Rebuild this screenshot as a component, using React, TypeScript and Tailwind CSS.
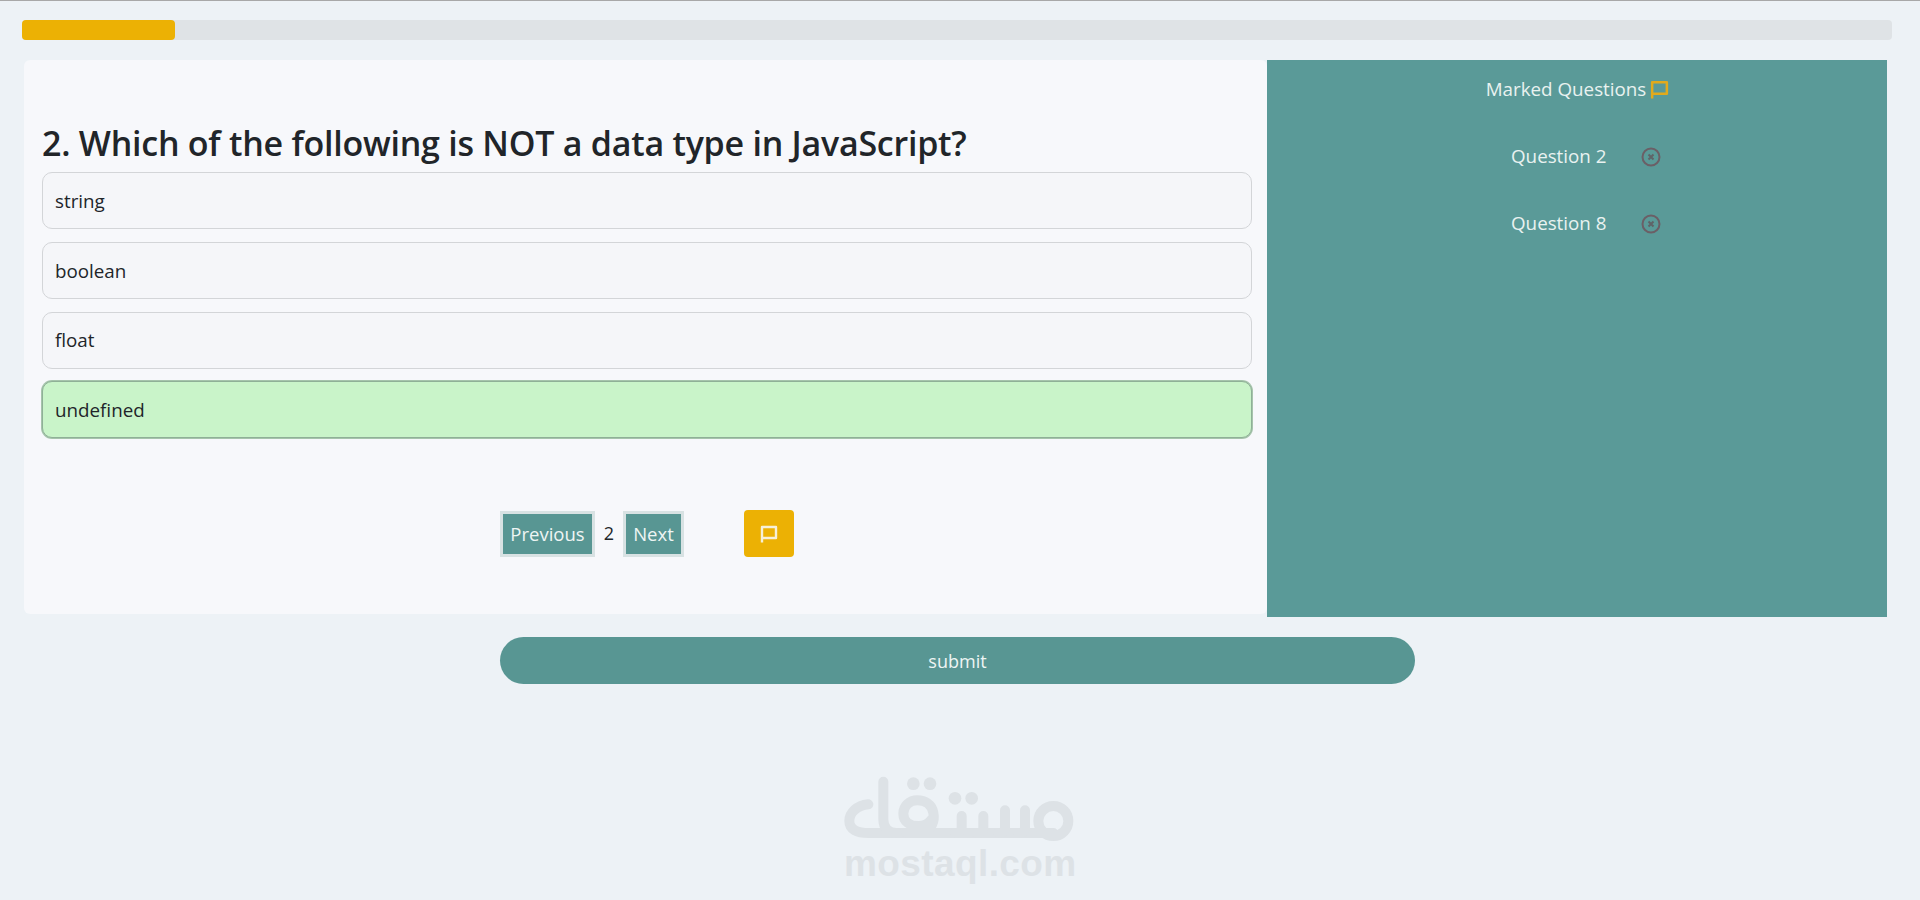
import React from "react";

const font = { fontFamily: '"Open Sans", "Noto Sans", sans-serif' };

function Flag({ className }: { className: string }) {
  return (
    <svg viewBox="0 0 20 20" fill="none" stroke="currentColor" strokeWidth="2.4" strokeLinejoin="round" className={className}>
      <path d="M3 18.5V3h14v11H3" />
    </svg>
  );
}

function Cross() {
  return (
    <svg viewBox="0 0 20 20" fill="none" stroke="#5f6468" strokeWidth="2" className="w-5 h-5">
      <circle cx="10" cy="10" r="8.5" stroke="#6b5f66" />
      <path d="M7.5 7.5l5 5M12.5 7.5l-5 5" />
    </svg>
  );
}

const options = ["string", "boolean", "float", "undefined"];

export default function App() {
  return (
    <div style={font} className="relative h-[900px] overflow-hidden bg-[#edf2f6] border-t border-[#a8a8a8] px-[22px] pt-[19px] text-[#212529]">
      <div className="h-5 rounded-[4px] bg-[#dfe3e6] mr-[6px]">
        <div className="h-5 w-[153px] rounded-[4px] bg-[#ecb104]" />
      </div>

      <div className="flex mt-5 ml-[2px] mr-[11px] items-start">
        <div className="w-[1243px] h-[554px] bg-[#f7f8fb] rounded-[6px] pl-[18px] pr-[15px] pt-[58px]">
          <h2 className="text-[34px] leading-[50px] font-semibold h-[54px] tracking-[-0.25px] text-[#212529]">
            2. Which of the following is NOT a data type in JavaScript?
          </h2>
          <div className="flex flex-col gap-[12.75px]">
            {options.map((o) => (
              <div
                key={o}
                className={
                  "h-[57px] rounded-[10px] border flex items-center px-3 pt-[1px] text-[18.8px] " +
                  (o === "undefined"
                    ? "bg-[#c9f4c9] border-[#8fb097] shadow-[0_0_0_1px_#a6c4ac]"
                    : "bg-[#f5f6f9] border-[#d3d5d8]")
                }
              >
                {o}
              </div>
            ))}
          </div>
          <div className="flex items-center mt-[72px] ml-[458px]">
            <button className="h-[46px] w-[95px] pt-[1px] bg-[#589693] border-[3px] border-[#d8e2e3] text-[#eef5f4] text-[18.5px]">
              Previous
            </button>
            <span className="w-[28px] text-center text-[18px]">2</span>
            <button className="h-[46px] w-[61px] pt-[1px] bg-[#589693] border-[3px] border-[#d8e2e3] text-[#eef5f4] text-[18.5px]">
              Next
            </button>
            <button className="ml-[60px] w-[50px] h-[47px] rounded-[4px] bg-[#ecb104] text-[#f7f0d8] flex items-center justify-center">
              <Flag className="w-[20px] h-[20px]" />
            </button>
          </div>
        </div>

        <div className="w-[620px] h-[557px] bg-[#5a9a98] flex flex-col text-[#e9f2f0] text-[18.8px]">
          <div className="flex justify-center items-center h-[58px] pl-[2px]">
            <span>Marked Questions</span>
            <Flag className="w-[21px] h-[21px] text-[#e2aa1c] ml-[3px]" />
          </div>
          <div className="flex items-center h-[67px] mt-[5px] pl-[244px]">
            <span className="w-[130px]">Question 2</span>
            <Cross />
          </div>
          <div className="flex items-center h-[67px] pl-[244px]">
            <span className="w-[130px]">Question 8</span>
            <Cross />
          </div>
        </div>
      </div>

      <button className="block ml-[478px] mt-5 w-[915px] h-[47px] pt-[1px] rounded-full bg-[#589693] text-[#eef5f4] text-[18px]">
        submit
      </button>

      <div className="absolute left-[840px] top-[770px] w-[240px] h-[115px] text-[#dde2e6]">
        <svg viewBox="0 0 720 345" className="absolute inset-0 w-[240px] h-[115px]" aria-label="mostaql logo">
          <g fill="none" stroke="currentColor" strokeWidth="30" strokeLinecap="round" strokeLinejoin="round">
            <path d="M85 100C50 104 28 125 28 150C28 175 50 186 85 186H640" />
            <path d="M130 32V145C130 172 145 186 170 186" />
            <path d="M200 186H250C275 175 285 150 280 125C275 100 255 88 232 88C208 88 190 105 190 128C190 152 210 165 235 165C255 165 268 155 275 145" />
            <circle cx="640" cy="150" r="45" />
            <path d="M365 135V170C365 180 358 186 345 186M430 135V170C430 180 422 186 410 186M495 118V170C495 180 488 186 475 186M555 118V170C555 180 548 186 535 186" />
          </g>
          <g fill="currentColor">
            <circle cx="220" cy="38" r="19" />
            <circle cx="270" cy="38" r="19" />
            <circle cx="345" cy="82" r="19" />
            <circle cx="395" cy="82" r="19" />
          </g>
        </svg>
        <div className="absolute left-[4px] top-[71px] text-[37px] leading-[44px] font-bold tracking-[0.4px]" style={{ fontFamily: '"Liberation Sans", sans-serif' }}>
          mostaql.com
        </div>
      </div>
    </div>
  );
}
